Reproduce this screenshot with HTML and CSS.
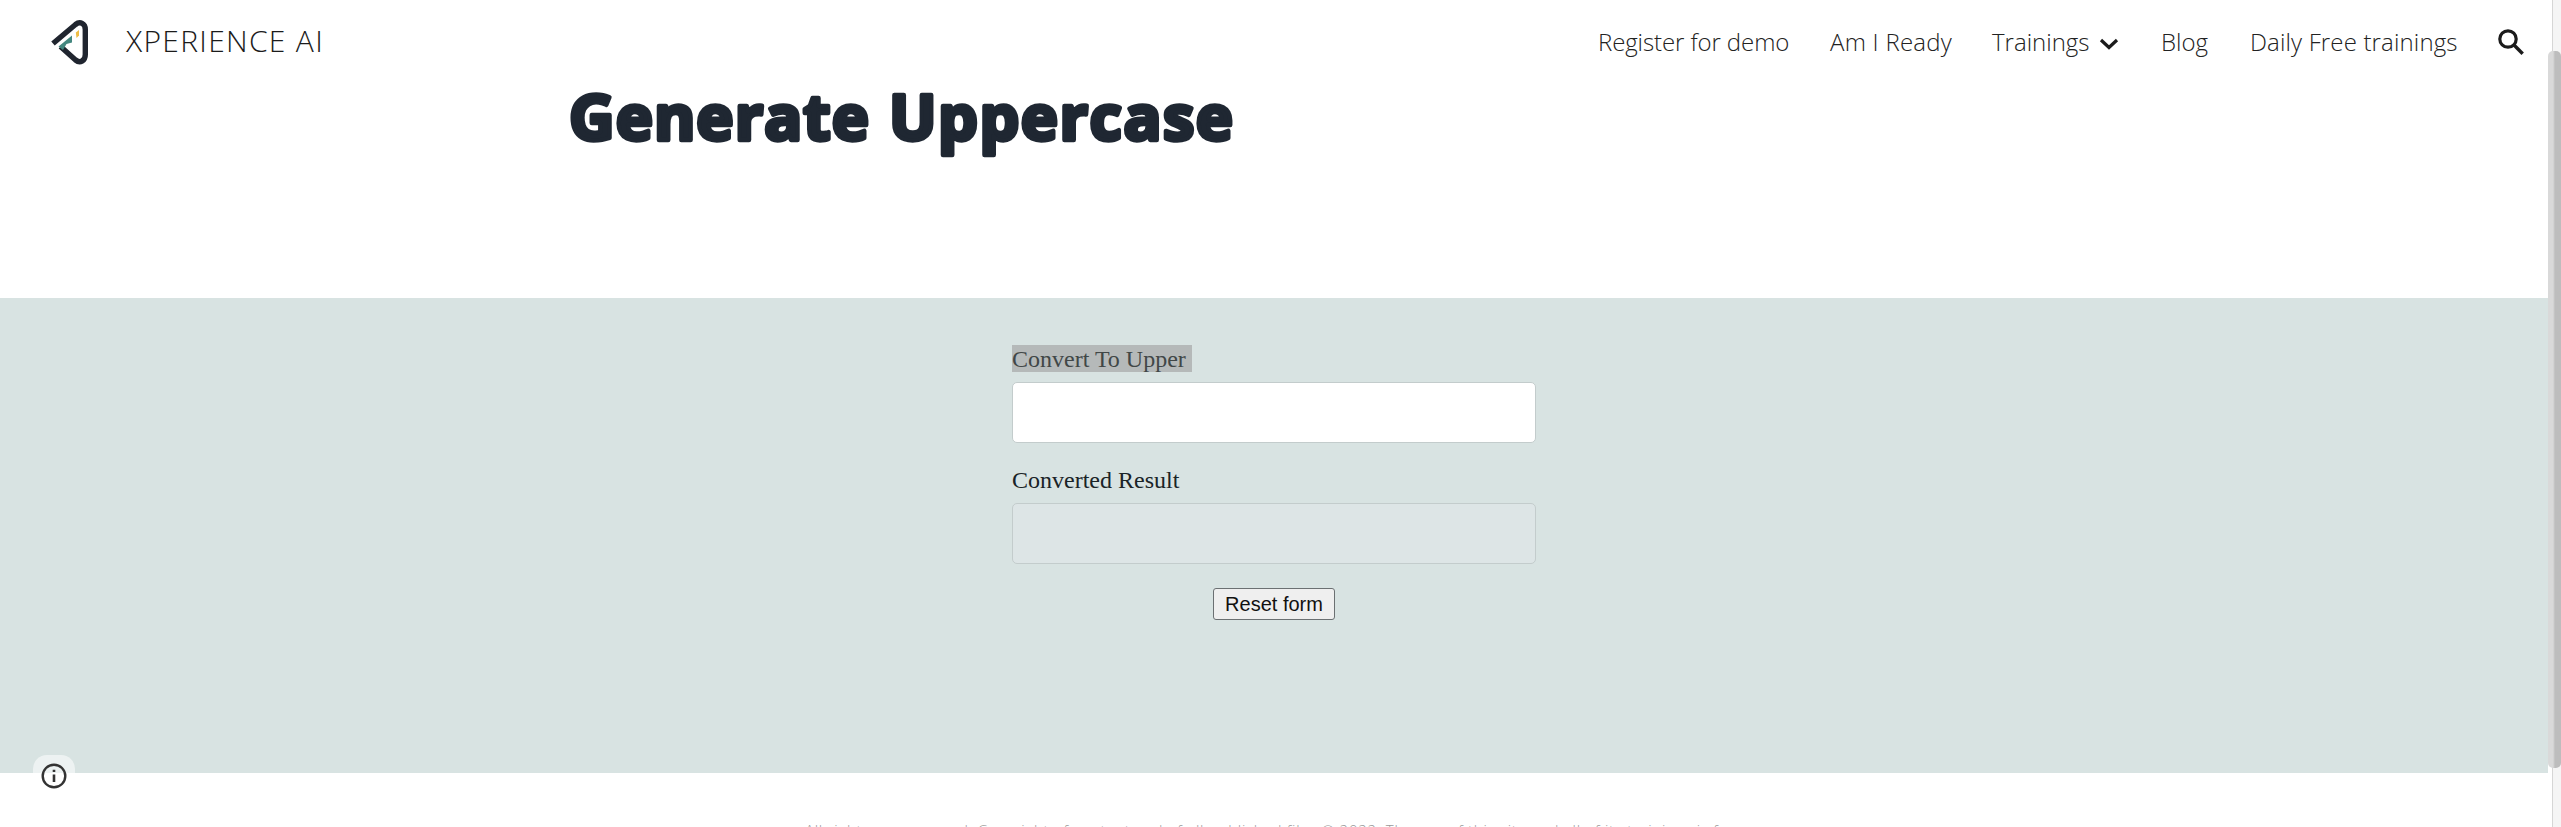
FILE: index.html
```html
<!DOCTYPE html>
<html lang="en">
<head>
<meta charset="utf-8">
<title>Generate Uppercase</title>
<link rel="stylesheet" href="styles.css">
</head>
<body>
<div class="page">
  <header class="topbar">
    <svg class="logo" viewBox="0 0 40 48" width="40" height="48">
      <path d="M3 25.500 25.500 6.500C30 3 35.300 5.500 35.300 11.500V36.500C35.300 43 30 45.500 25.500 42L10.500 28.500" fill="none" stroke="#20252f" stroke-width="5.400"/>
      <path d="M8.500 28.500 22 17.500V24.500L16.500 26 13 32Z" fill="#44877f"/>
      <path d="M25.800 14.500 29 12V17.500L26.500 20Z" fill="#efbd45"/>
    </svg>
    <span class="brand">XPERIENCE AI</span>
    <nav class="nav">
      <a class="link register">Register for demo</a>
      <a class="link ready">Am I Ready</a>
      <a class="link trainings">Trainings</a>
      <svg class="chevron" viewBox="0 0 20 14" width="20" height="14"><path d="M2 3 10 10.500 18 3" fill="none" stroke="#1b1b1b" stroke-width="3.200"/></svg>
      <a class="link blog">Blog</a>
      <a class="link daily">Daily Free trainings</a>
      <svg class="search" viewBox="0 0 26 26" width="26" height="26"><circle cx="10" cy="10" r="8.200" fill="none" stroke="#1b1b1b" stroke-width="3.200"/><path d="M16 16 24.700 24.700" stroke="#1b1b1b" stroke-width="3.400"/></svg>
    </nav>
  </header>
  <h1 class="title">
    <svg class="title-art" width="680" height="90" viewBox="0 0 680 90">
      <text x="1" y="55.500" textLength="300">Generate</text>
      <text x="321" y="55.500" textLength="344">Uppercase</text>
    </svg>
  </h1>
  <main class="band">
    <form class="form">
      <label class="label"><span class="selected">Convert To Upper </span></label>
      <input class="field" type="text">
      <label class="label">Converted Result</label>
      <input class="field result" type="text" disabled>
      <button class="reset" type="reset">Reset form</button>
    </form>
  </main>
  <footer class="footer">All rights are reserved. Copyright of content and of all published files © 2022. The use of this site and all of its trainings is free</footer>
</div>
<div class="info"><svg viewBox="0 0 26 26" width="26" height="26"><circle cx="13" cy="13" r="11.300" fill="none" stroke="#333" stroke-width="2.400"/><path d="M13 11.500V19M13 6.700V9" stroke="#333" stroke-width="2.600"/></svg></div>
<div class="scrollbar"><div class="thumb"></div></div>
</body>
</html>
```
FILE: styles.css
```css
* { box-sizing: border-box; }
body { margin: 0; background: #fff; overflow: hidden; }
.page { width: 2548px; height: 827px; overflow: hidden; display: flex; flex-direction: column; }
.topbar { height: 84px; flex: none; display: flex; align-items: center; padding-left: 50px; font-family: "Open Sans", sans-serif; font-weight: 300; color: #222; }
.logo { flex: none; }
.brand { margin: 0 0 3px 36px; font-size: 30px; line-height: 40px; letter-spacing: 1.3px; white-space: nowrap; color: #1b1b1b; }
.nav { margin-left: auto; display: flex; align-items: center; padding-right: 24px; }
.link { font-size: 24px; line-height: 34px; white-space: nowrap; flex: none; }
.register { width: 232px; letter-spacing: -.1px; }
.ready { width: 162px; letter-spacing: .25px; }
.trainings { width: 107px; }
.chevron { margin-right: 42px; margin-top: 3px; }
.blog { width: 89px; }
.daily { width: 248px; letter-spacing: .15px; }
.title { margin: 0; height: 214px; flex: none; padding-left: 568px; }
.title-art { display: block; overflow: visible; font-family: "Open Sans", sans-serif; font-size: 63px; font-weight: 700; fill: #1f2732; stroke: #1f2732; stroke-width: 4.4px; stroke-linejoin: round; }
.band { height: 475px; flex: none; background: #d8e3e2; display: flex; justify-content: center; padding-top: 47px; }
.form { width: 524px; display: flex; flex-direction: column; font-family: "Liberation Serif", serif; font-size: 24px; color: #1a2427; }
.label { height: 37px; flex: none; line-height: 28px; white-space: pre; }
.selected { background: #b5b9b9; color: #414747; display: block; width: 180px; height: 27px; line-height: 28px; }
.field { width: 524px; height: 61px; flex: none; border: 1px solid #c3cccc; border-radius: 5px; background: #fff; margin: 0 0 23px; }
.result { background: #dde5e6; margin-bottom: 24px; }
.reset { align-self: center; width: 122px; height: 32px; border: 1px solid #6b7072; border-radius: 3px; background: #efefef; color: #111; padding: 0; font: 20px "Liberation Sans", sans-serif; }
.footer { flex: none; margin-top: 45px; text-align: center; font: 300 15px/24px "Open Sans", sans-serif; letter-spacing: .75px; color: #999; white-space: nowrap; }
.info { position: absolute; left: 33px; top: 755px; width: 42px; height: 42px; border-radius: 14px; background: rgba(255,255,255,.55); display: flex; align-items: center; justify-content: center; }
.scrollbar { position: absolute; right: 0; top: 0; width: 9px; height: 827px; background: #f5f5f5; border-left: 1px solid #d6d6d6; }
.thumb { position: absolute; left: -5px; top: 51px; width: 13px; height: 717px; border-radius: 5px; background: linear-gradient(90deg, #d9d9d9 5px, #bdbdbd 7px); }
```
